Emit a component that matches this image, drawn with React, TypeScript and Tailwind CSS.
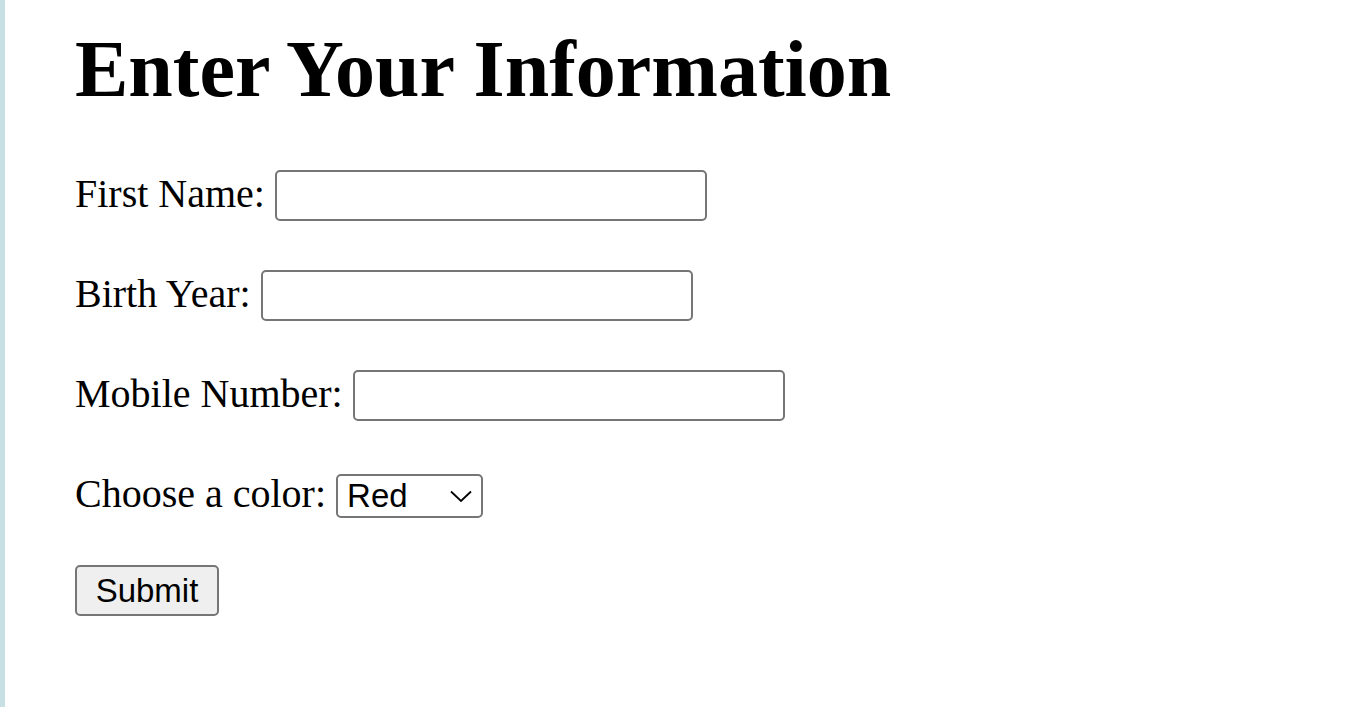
import React from "react";

const serif = "font-['Liberation_Serif','Times_New_Roman',serif]";
const sans = "font-['Liberation_Sans',Arial,sans-serif]";

function Field({ label, name }: { label: string; name: string }) {
  return (
    <div className="flex h-[51px] items-center">
      <label htmlFor={name} className="mr-[10px] pb-[3px] text-[40px] leading-normal">
        {label}
      </label>
      <input
        id={name}
        type="text"
        className={`${sans} h-[51px] w-[432px] rounded-[5px] border-2 border-[#767676] bg-white px-[5px] text-[33px] outline-none`}
      />
    </div>
  );
}

export default function App() {
  return (
    <div className={`${serif} flex min-h-screen bg-white text-black`}>
      {/* light blue strip on the left edge */}
      <div className="w-[5px] shrink-0 bg-[#c8dfe4]"></div>

      <div className="pl-[70px]">
        <h1 className="mt-[25px] text-[80px] font-bold leading-[89px]">Enter Your Information</h1>

        <form className="mt-[56px] flex flex-col gap-[49px]">
          <Field label="First Name:" name="fname" />
          <Field label="Birth Year:" name="byear" />
          <Field label="Mobile Number:" name="mobile" />

          <div className="flex h-[51px] items-center">
            <label htmlFor="color" className="mr-[10px] pb-[3px] text-[40px] leading-normal">
              Choose a color:
            </label>
            <div
              className={`${sans} flex h-[44px] w-[147px] items-center justify-between rounded-[5px] border-2 border-[#767676] bg-white pl-[9px] pr-[9px] text-[33px]`}
            >
              <span className="leading-none">Red</span>
              <svg width="22" height="12" viewBox="0 0 22 12" fill="none">
                <path d="M1 1.5l10 9.5 10-9.5" stroke="black" strokeWidth="1.8" />
              </svg>
            </div>
          </div>
        </form>

        <button
          type="button"
          className={`${sans} mt-[44px] h-[51px] w-[144px] rounded-[5px] border-2 border-[#767676] bg-[#efefef] text-[33px] leading-none`}
        >
          Submit
        </button>
      </div>
    </div>
  );
}
